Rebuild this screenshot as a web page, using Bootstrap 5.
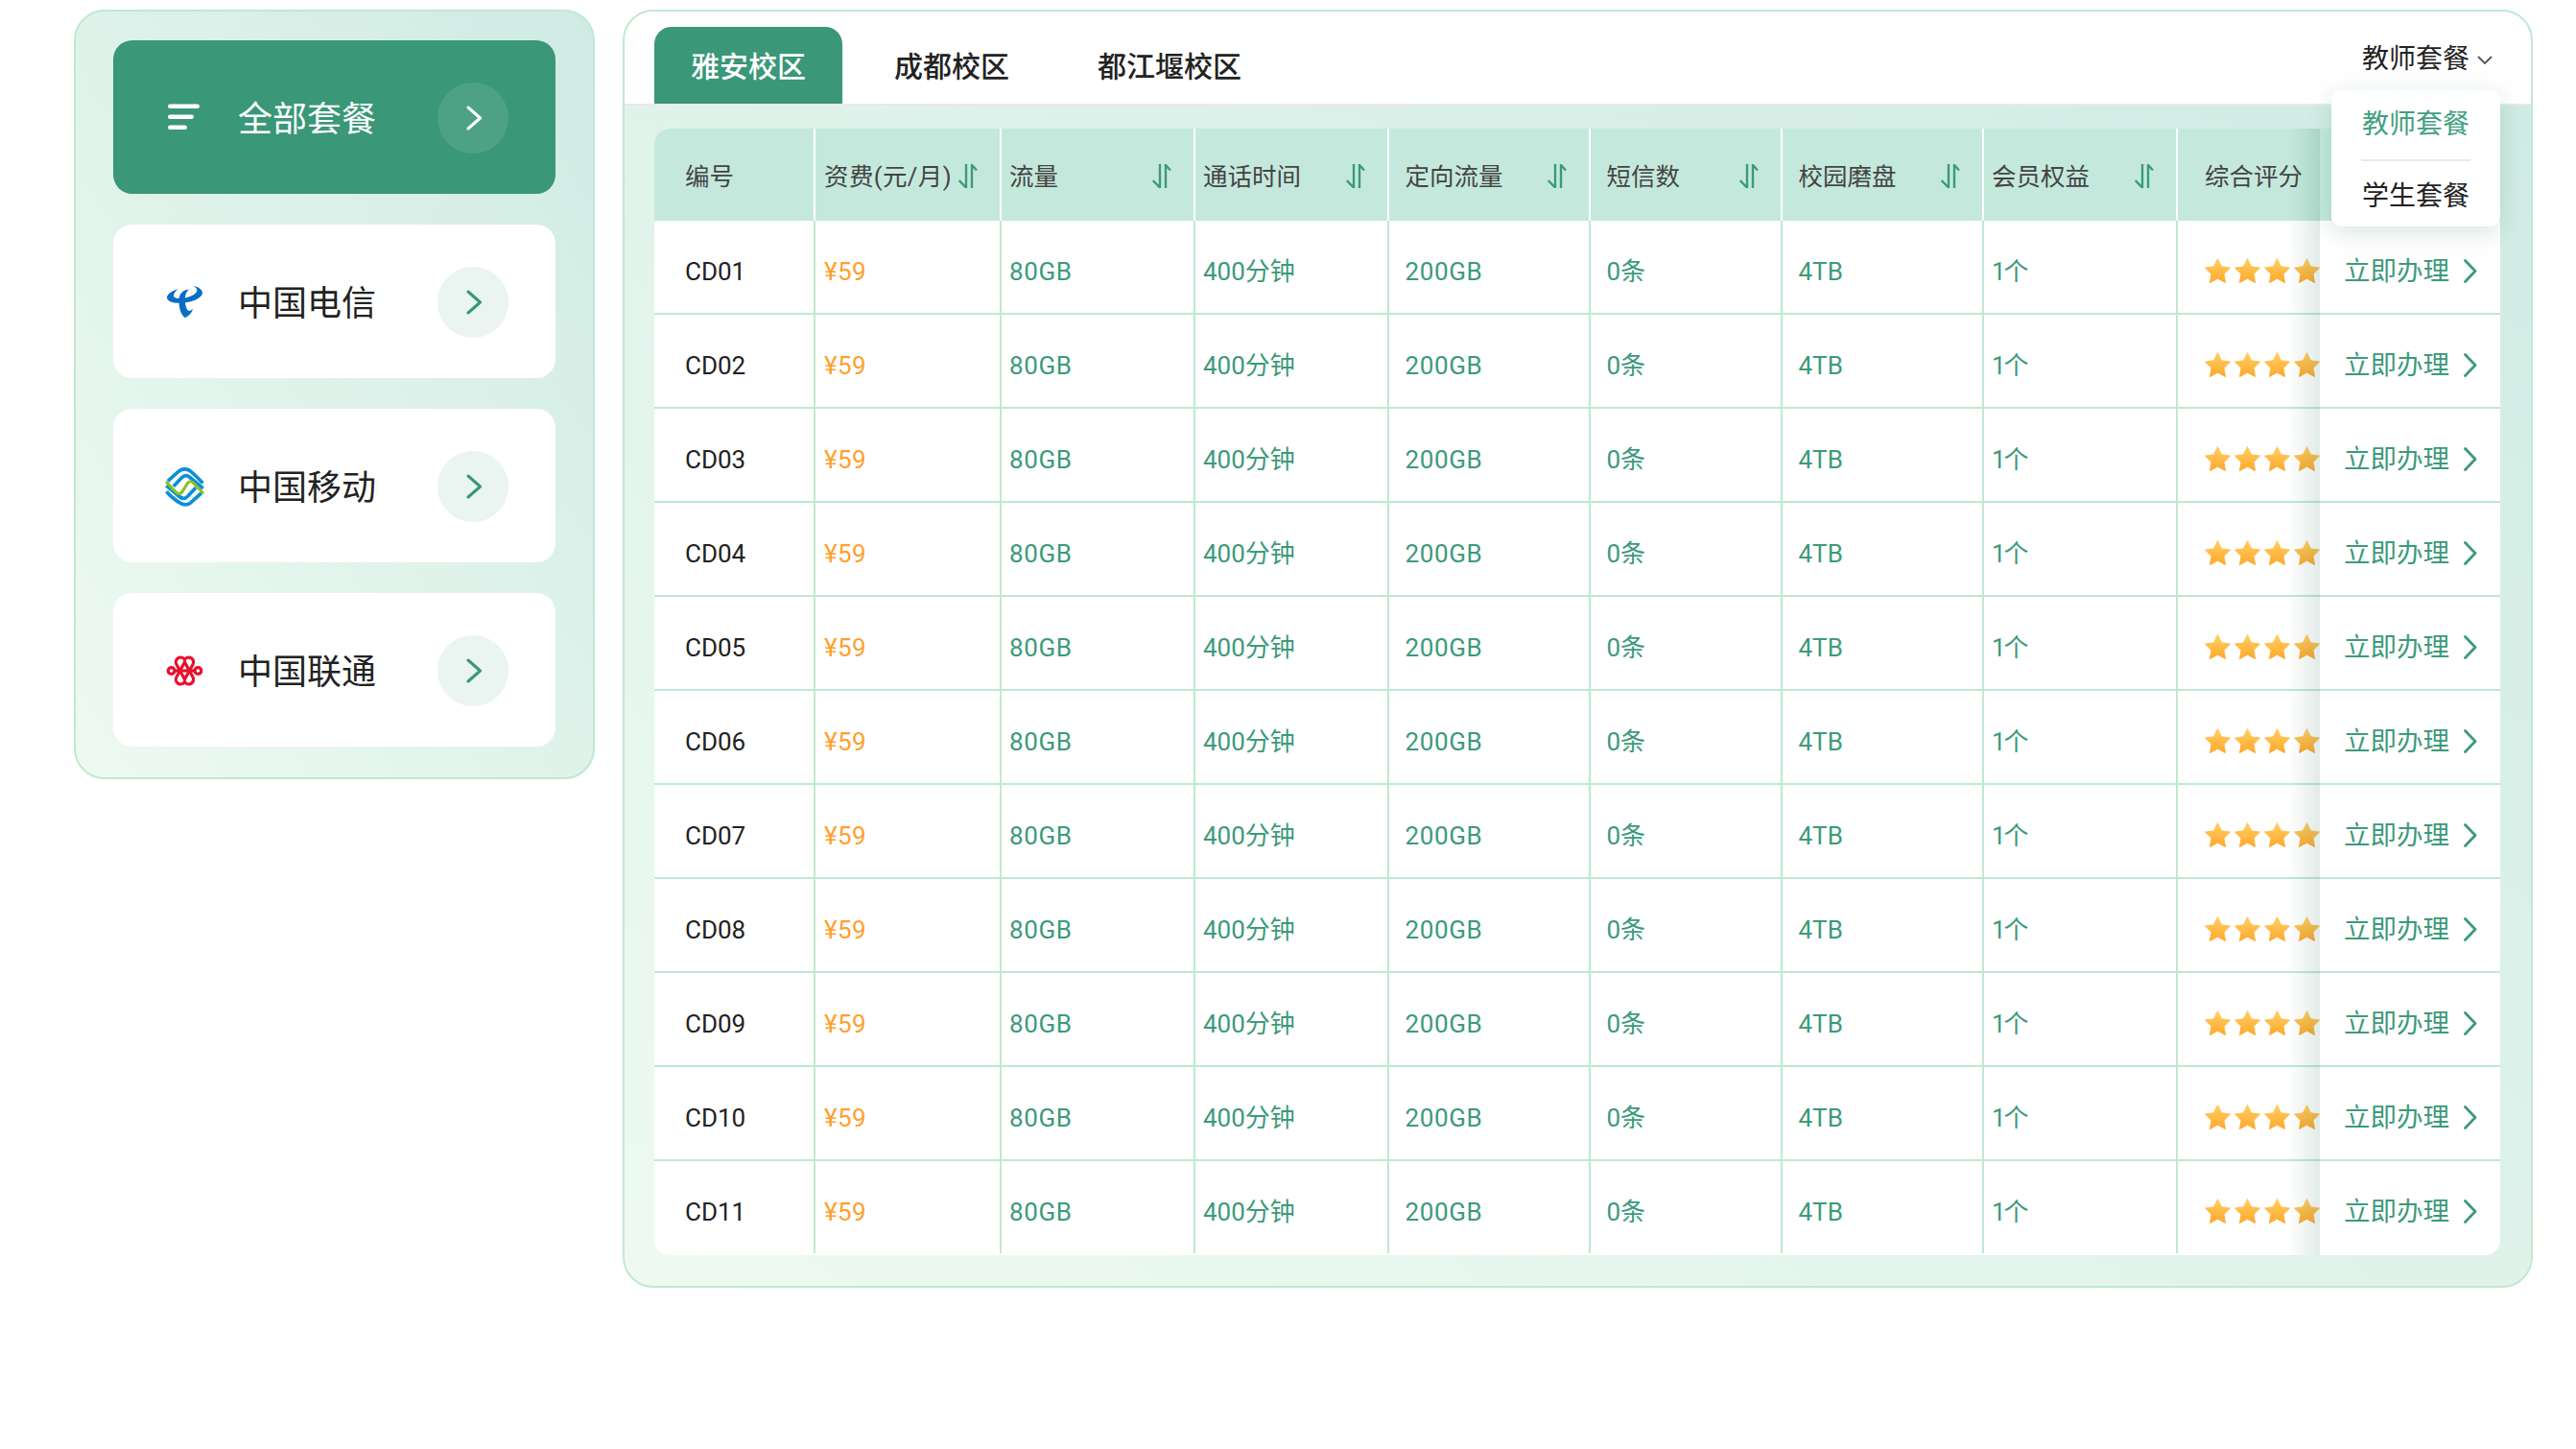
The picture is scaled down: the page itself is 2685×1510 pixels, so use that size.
<!DOCTYPE html>
<html lang="zh-CN">
<head>
<meta charset="utf-8">
<title>套餐</title>
<link rel="stylesheet" href="https://cdn.jsdelivr.net/npm/bootstrap@5.3.0/dist/css/bootstrap.min.css">
<style>
:root{--g:#3a9777;--line:#bfe9cf;}
body{background:#fff;margin:0;font-family:Roboto,"Noto Sans CJK SC",sans-serif;color:#222;}
.page-wrap{padding:10px 0 0 77px;gap:29px;align-items:flex-start;}
.side-panel,.main-panel{border:2px solid var(--line);border-radius:32px;background:linear-gradient(to top right,#eefaf1,#cfebe4);}
.side-panel{width:543px;padding:30px 39px 32px;gap:32px;}
.pkg-item{height:160px;background:#fff;border-radius:20px;padding:2px 49px 0 54px;font-size:36px;line-height:1;color:#222;text-decoration:none;}
.pkg-item.on{background:var(--g);color:#fff;}
.pkg-name{flex-grow:1;padding-top:3px;}
.pkg-ico{width:41px;height:41px;margin-right:35px;flex:none;}
.go-dot{width:74px;height:74px;border-radius:50%;background:#eaf4f1;flex:none;color:var(--g);}
.go-dot svg{margin-left:3px;}
.on .go-dot{background:#4da286;color:#fff;}
.main-panel{width:1991px;overflow:visible;}
.top-bar{height:98px;background:#fff;border-bottom:2px solid #e9e9e9;border-radius:30px 30px 0 0;padding:16px 40px 0 31px;}
.camp-tab.nav-link{height:80px;padding:23px 38px 0;font-size:30px;line-height:38px;font-weight:500;color:#222;border-radius:18px 18px 0 0;margin-right:16px;}
.camp-tab.nav-link.active{background:var(--g);color:#fff;margin-right:16px;}
.kind-drop{position:relative;font-size:28px;line-height:36px;align-self:flex-start;margin-top:16px;}
.kind-btn{color:#222;gap:8px;}
.kind-drop .dropdown-menu{top:50px;right:-8px;left:auto;width:176px;min-width:0;padding:14px 32px 9px;border:0;border-radius:10px;box-shadow:0 6px 26px rgba(30,110,85,.18);font-size:28px;}
.kind-drop .dropdown-item{padding:0;line-height:44px;text-align:center;color:#222;background:none;}
.kind-drop .dropdown-item.active{color:#42a07f;}
.kind-drop .dropdown-divider{margin:14px -1px 15px;border-top:2px solid #e9e9e9;opacity:1;}
.body-pad{padding:24px 32px 32px 31px;}
.tbl-wrap{background:#fff;border-radius:16px;overflow:hidden;padding-bottom:2px;}
.plan-tbl{table-layout:fixed;width:1924px;margin:0;border-collapse:separate;border-spacing:0;font-size:26px;}
.plan-tbl th,.plan-tbl td{border:0;box-shadow:none;white-space:nowrap;position:relative;background:#fff;vertical-align:middle;}
.plan-tbl th{height:96px;background:#c4e9dc;padding:3px 23px 0 8px;font-weight:400;font-size:25.500px;color:#444;border-right:2px solid #fff;line-height:36px;}
.plan-tbl td{height:98px;padding:10px 4px 0 8px;border-right:2px solid var(--line);border-bottom:2px solid var(--line);line-height:36px;color:#3c9a7a;}
.plan-tbl tr:last-child td{height:96px;border-bottom:0;}
.plan-tbl .c-no{padding-left:32px;color:#222;}
.plan-tbl th.c-no{color:#444;}
.plan-tbl .c-price{padding-left:9px;color:#ff9f2e;letter-spacing:.4px;}
.plan-tbl th.c-price{color:#444;}
.plan-tbl .c-wide{padding-left:16.500px;}
.plan-tbl .c-data{letter-spacing:.6px;}
.plan-tbl .c-cnt{letter-spacing:-2px;}
.plan-tbl .c-rate{padding-left:28px;padding-right:0;border-right:0;}
.plan-tbl .c-fix{border-right:0;padding:10px 24px 0 25px;}
.plan-tbl th.c-fix{padding:0;}
.plan-tbl .c-fix::before{content:"";position:absolute;top:0;bottom:-2px;left:-33px;width:33px;background:linear-gradient(to right,rgba(30,100,80,0),rgba(30,100,80,.13));}
.buy-link{font-size:27.500px;color:#3c9a7a;text-decoration:none;}
.buy-link svg{margin-top:-2px;}
.star-row{gap:4px;margin-top:-3px;}
</style>
</head>
<body>
<svg width="0" height="0" style="position:absolute">
  <defs>
    <linearGradient id="sg" x1="0" y1="0" x2="0" y2="1"><stop offset="0" stop-color="#ffcf63"/><stop offset="1" stop-color="#ffa82c"/></linearGradient>
    <symbol id="star" viewBox="0 0 27 26"><path d="M13.500 .5l4 8.300 9 1.300-6.500 6.400 1.500 9-8-4.300-8 4.300 1.500-9L.5 10.100l9-1.300z" fill="url(#sg)" stroke="url(#sg)" stroke-linejoin="round"/></symbol>
    <symbol id="sort" viewBox="0 0 20 25"><path d="M8 0v24.500L.7 17M14 25V1l5 5.500" fill="none" stroke="#3c9a7a" stroke-width="2.400"/></symbol>
    <symbol id="chev" viewBox="0 0 17 26"><path d="M2 2l12.500 11L2 24" fill="none" stroke="currentColor" stroke-width="3" stroke-linecap="round" stroke-linejoin="round"/></symbol>
    <symbol id="chs" viewBox="0 0 14 25"><path d="M1.500 1.500L12 12.500 1.500 23.500" fill="none" stroke="#3c9a7a" stroke-width="2.800" stroke-linecap="round" stroke-linejoin="round"/></symbol>
  </defs>
</svg>
<div class="d-flex page-wrap">
  <aside class="side-panel d-flex flex-column">
    <a class="pkg-item on d-flex align-items-center" href="#">
      <svg class="pkg-ico" viewBox="0 0 41 41"><g fill="#fff"><rect x="3" y="5.500" width="33" height="4.600" rx="2.300"/><rect x="3" y="16.500" width="27" height="4.600" rx="2.300"/><rect x="3" y="27.500" width="20" height="4.600" rx="2.300"/></g></svg>
      <span class="pkg-name">全部套餐</span>
      <span class="go-dot d-flex align-items-center justify-content-center"><svg width="17" height="26"><use href="#chev"/></svg></span>
    </a>
    <a class="pkg-item d-flex align-items-center" href="#">
      <svg class="pkg-ico" viewBox="-2 -3 41 41"><g fill="#0a6dc4"><path d="M12 3C4 5.500 0 9 0 12c0 5 9 6.500 18 5.500 9-1 19-5 19-10.500 0-3-4-6-9.500-7C31 2 32 3.500 31 6 29 10 20 13 14 13 8.500 13 6.500 11.500 7 9.500c.5-2 2-4.500 5-6.500z"/><path d="M24 3.500C17 3.500 12.500 8 12.500 15c0 7 1.500 14 6 18 3-.5 7.500-4.500 8.500-9-2.500 2-4 2.500-5 1.500-2.500-2.500-3.500-9-3-14 .5-4 2-7 5-8.500z"/></g></svg>
      <span class="pkg-name">中国电信</span>
      <span class="go-dot d-flex align-items-center justify-content-center"><svg width="17" height="26"><use href="#chev"/></svg></span>
    </a>
    <a class="pkg-item d-flex align-items-center" href="#">
      <svg class="pkg-ico" viewBox="0 0 40 40"><g fill="none" stroke-width="3.600" stroke-linejoin="round"><g stroke="#0b8fd9"><path d="M3 14C7 10 11 6.500 14 4Q20-.5 26 4 32 9 38.500 16"/><path d="M8.700 19.300L17 10.500Q21 6.500 25 10L38.700 21.500"/><path d="M37 26C33 30 29 33.500 26 36 20 40.500 14 36 8 31 5 28.500 3 26.500 1.500 24.500"/><path d="M31.300 20.700L23 29.500Q19 33.500 15 30L1.300 18.500"/></g><path stroke="#8cc11f" stroke-width="3" d="M1 14.500L11.500 25.500Q14.500 28.500 17.500 25L23 16Q25.500 13 28.500 15.500L39 26.500"/></g></svg>
      <span class="pkg-name">中国移动</span>
      <span class="go-dot d-flex align-items-center justify-content-center"><svg width="17" height="26"><use href="#chev"/></svg></span>
    </a>
    <a class="pkg-item d-flex align-items-center" href="#">
      <svg class="pkg-ico" viewBox="-2 -4 41 41"><g fill="none" stroke="#e8112d" stroke-width="3.200"><path d="M18.500 25L10 9.500A4.800 4.800 0 0 1 18.500 4.500 4.800 4.800 0 0 1 27 9.500z"/><path d="M18.500 7L10 22.500A4.800 4.800 0 0 0 18.500 27.500 4.800 4.800 0 0 0 27 22.500z"/><path d="M7.500 16h22"/><circle cx="4.600" cy="16" r="3.400"/><circle cx="32.400" cy="16" r="3.400"/></g></svg>
      <span class="pkg-name">中国联通</span>
      <span class="go-dot d-flex align-items-center justify-content-center"><svg width="17" height="26"><use href="#chev"/></svg></span>
    </a>
  </aside>
  <main class="main-panel">
    <div class="top-bar d-flex justify-content-between">
      <ul class="nav align-items-end">
        <li class="nav-item"><a class="nav-link camp-tab active" href="#">雅安校区</a></li>
        <li class="nav-item"><a class="nav-link camp-tab" href="#">成都校区</a></li>
        <li class="nav-item"><a class="nav-link camp-tab" href="#">都江堰校区</a></li>
      </ul>
      <div class="dropdown kind-drop">
        <div class="kind-btn d-flex align-items-center">教师套餐<svg width="16" height="9" viewBox="0 0 16 9"><path d="M1 1l7 7 7-7" fill="none" stroke="#555" stroke-width="1.800"/></svg></div>
        <div class="dropdown-menu show">
          <a class="dropdown-item active" href="#">教师套餐</a>
          <div class="dropdown-divider"></div>
          <a class="dropdown-item" href="#">学生套餐</a>
        </div>
      </div>
    </div>
    <div class="body-pad">
      <div class="tbl-wrap">
        <table class="table plan-tbl">
          <colgroup><col style="width:168px"><col style="width:194px"><col style="width:202px"><col style="width:202px"><col style="width:210px"><col style="width:200px"><col style="width:210px"><col style="width:202px"><col style="width:148px"><col style="width:188px"></colgroup>
          <thead><tr>
            <th class="c-no">编号</th>
            <th class="c-price"><div class="d-flex justify-content-between align-items-center">资费(元/月)<svg width="20" height="25"><use href="#sort"/></svg></div></th>
            <th><div class="d-flex justify-content-between align-items-center">流量<svg width="20" height="25"><use href="#sort"/></svg></div></th>
            <th><div class="d-flex justify-content-between align-items-center">通话时间<svg width="20" height="25"><use href="#sort"/></svg></div></th>
            <th class="c-wide"><div class="d-flex justify-content-between align-items-center">定向流量<svg width="20" height="25"><use href="#sort"/></svg></div></th>
            <th class="c-wide"><div class="d-flex justify-content-between align-items-center">短信数<svg width="20" height="25"><use href="#sort"/></svg></div></th>
            <th class="c-wide"><div class="d-flex justify-content-between align-items-center">校园磨盘<svg width="20" height="25"><use href="#sort"/></svg></div></th>
            <th><div class="d-flex justify-content-between align-items-center">会员权益<svg width="20" height="25"><use href="#sort"/></svg></div></th>
            <th class="c-rate">综合评分</th>
            <th class="c-fix"></th>
          </tr></thead>
          <tbody>
            <tr><td class="c-no">CD01</td><td class="c-price">¥59</td><td class="c-data">80GB</td><td>400分钟</td><td class="c-wide c-data">200GB</td><td class="c-wide">0条</td><td class="c-wide">4TB</td><td class="c-cnt">1个</td><td class="c-rate"><div class="d-flex star-row"><svg width="27" height="26"><use href="#star"/></svg><svg width="27" height="26"><use href="#star"/></svg><svg width="27" height="26"><use href="#star"/></svg><svg width="27" height="26"><use href="#star"/></svg></div></td><td class="c-fix"><a class="buy-link d-flex justify-content-between align-items-center" href="#">立即办理<svg width="14" height="25"><use href="#chs"/></svg></a></td></tr>
            <tr><td class="c-no">CD02</td><td class="c-price">¥59</td><td class="c-data">80GB</td><td>400分钟</td><td class="c-wide c-data">200GB</td><td class="c-wide">0条</td><td class="c-wide">4TB</td><td class="c-cnt">1个</td><td class="c-rate"><div class="d-flex star-row"><svg width="27" height="26"><use href="#star"/></svg><svg width="27" height="26"><use href="#star"/></svg><svg width="27" height="26"><use href="#star"/></svg><svg width="27" height="26"><use href="#star"/></svg></div></td><td class="c-fix"><a class="buy-link d-flex justify-content-between align-items-center" href="#">立即办理<svg width="14" height="25"><use href="#chs"/></svg></a></td></tr>
            <tr><td class="c-no">CD03</td><td class="c-price">¥59</td><td class="c-data">80GB</td><td>400分钟</td><td class="c-wide c-data">200GB</td><td class="c-wide">0条</td><td class="c-wide">4TB</td><td class="c-cnt">1个</td><td class="c-rate"><div class="d-flex star-row"><svg width="27" height="26"><use href="#star"/></svg><svg width="27" height="26"><use href="#star"/></svg><svg width="27" height="26"><use href="#star"/></svg><svg width="27" height="26"><use href="#star"/></svg></div></td><td class="c-fix"><a class="buy-link d-flex justify-content-between align-items-center" href="#">立即办理<svg width="14" height="25"><use href="#chs"/></svg></a></td></tr>
            <tr><td class="c-no">CD04</td><td class="c-price">¥59</td><td class="c-data">80GB</td><td>400分钟</td><td class="c-wide c-data">200GB</td><td class="c-wide">0条</td><td class="c-wide">4TB</td><td class="c-cnt">1个</td><td class="c-rate"><div class="d-flex star-row"><svg width="27" height="26"><use href="#star"/></svg><svg width="27" height="26"><use href="#star"/></svg><svg width="27" height="26"><use href="#star"/></svg><svg width="27" height="26"><use href="#star"/></svg></div></td><td class="c-fix"><a class="buy-link d-flex justify-content-between align-items-center" href="#">立即办理<svg width="14" height="25"><use href="#chs"/></svg></a></td></tr>
            <tr><td class="c-no">CD05</td><td class="c-price">¥59</td><td class="c-data">80GB</td><td>400分钟</td><td class="c-wide c-data">200GB</td><td class="c-wide">0条</td><td class="c-wide">4TB</td><td class="c-cnt">1个</td><td class="c-rate"><div class="d-flex star-row"><svg width="27" height="26"><use href="#star"/></svg><svg width="27" height="26"><use href="#star"/></svg><svg width="27" height="26"><use href="#star"/></svg><svg width="27" height="26"><use href="#star"/></svg></div></td><td class="c-fix"><a class="buy-link d-flex justify-content-between align-items-center" href="#">立即办理<svg width="14" height="25"><use href="#chs"/></svg></a></td></tr>
            <tr><td class="c-no">CD06</td><td class="c-price">¥59</td><td class="c-data">80GB</td><td>400分钟</td><td class="c-wide c-data">200GB</td><td class="c-wide">0条</td><td class="c-wide">4TB</td><td class="c-cnt">1个</td><td class="c-rate"><div class="d-flex star-row"><svg width="27" height="26"><use href="#star"/></svg><svg width="27" height="26"><use href="#star"/></svg><svg width="27" height="26"><use href="#star"/></svg><svg width="27" height="26"><use href="#star"/></svg></div></td><td class="c-fix"><a class="buy-link d-flex justify-content-between align-items-center" href="#">立即办理<svg width="14" height="25"><use href="#chs"/></svg></a></td></tr>
            <tr><td class="c-no">CD07</td><td class="c-price">¥59</td><td class="c-data">80GB</td><td>400分钟</td><td class="c-wide c-data">200GB</td><td class="c-wide">0条</td><td class="c-wide">4TB</td><td class="c-cnt">1个</td><td class="c-rate"><div class="d-flex star-row"><svg width="27" height="26"><use href="#star"/></svg><svg width="27" height="26"><use href="#star"/></svg><svg width="27" height="26"><use href="#star"/></svg><svg width="27" height="26"><use href="#star"/></svg></div></td><td class="c-fix"><a class="buy-link d-flex justify-content-between align-items-center" href="#">立即办理<svg width="14" height="25"><use href="#chs"/></svg></a></td></tr>
            <tr><td class="c-no">CD08</td><td class="c-price">¥59</td><td class="c-data">80GB</td><td>400分钟</td><td class="c-wide c-data">200GB</td><td class="c-wide">0条</td><td class="c-wide">4TB</td><td class="c-cnt">1个</td><td class="c-rate"><div class="d-flex star-row"><svg width="27" height="26"><use href="#star"/></svg><svg width="27" height="26"><use href="#star"/></svg><svg width="27" height="26"><use href="#star"/></svg><svg width="27" height="26"><use href="#star"/></svg></div></td><td class="c-fix"><a class="buy-link d-flex justify-content-between align-items-center" href="#">立即办理<svg width="14" height="25"><use href="#chs"/></svg></a></td></tr>
            <tr><td class="c-no">CD09</td><td class="c-price">¥59</td><td class="c-data">80GB</td><td>400分钟</td><td class="c-wide c-data">200GB</td><td class="c-wide">0条</td><td class="c-wide">4TB</td><td class="c-cnt">1个</td><td class="c-rate"><div class="d-flex star-row"><svg width="27" height="26"><use href="#star"/></svg><svg width="27" height="26"><use href="#star"/></svg><svg width="27" height="26"><use href="#star"/></svg><svg width="27" height="26"><use href="#star"/></svg></div></td><td class="c-fix"><a class="buy-link d-flex justify-content-between align-items-center" href="#">立即办理<svg width="14" height="25"><use href="#chs"/></svg></a></td></tr>
            <tr><td class="c-no">CD10</td><td class="c-price">¥59</td><td class="c-data">80GB</td><td>400分钟</td><td class="c-wide c-data">200GB</td><td class="c-wide">0条</td><td class="c-wide">4TB</td><td class="c-cnt">1个</td><td class="c-rate"><div class="d-flex star-row"><svg width="27" height="26"><use href="#star"/></svg><svg width="27" height="26"><use href="#star"/></svg><svg width="27" height="26"><use href="#star"/></svg><svg width="27" height="26"><use href="#star"/></svg></div></td><td class="c-fix"><a class="buy-link d-flex justify-content-between align-items-center" href="#">立即办理<svg width="14" height="25"><use href="#chs"/></svg></a></td></tr>
            <tr><td class="c-no">CD11</td><td class="c-price">¥59</td><td class="c-data">80GB</td><td>400分钟</td><td class="c-wide c-data">200GB</td><td class="c-wide">0条</td><td class="c-wide">4TB</td><td class="c-cnt">1个</td><td class="c-rate"><div class="d-flex star-row"><svg width="27" height="26"><use href="#star"/></svg><svg width="27" height="26"><use href="#star"/></svg><svg width="27" height="26"><use href="#star"/></svg><svg width="27" height="26"><use href="#star"/></svg></div></td><td class="c-fix"><a class="buy-link d-flex justify-content-between align-items-center" href="#">立即办理<svg width="14" height="25"><use href="#chs"/></svg></a></td></tr>
          </tbody>
        </table>
      </div>
    </div>
  </main>
</div>
<script src="https://cdn.jsdelivr.net/npm/bootstrap@5.3.0/dist/js/bootstrap.bundle.min.js"></script>
</body>
</html>
